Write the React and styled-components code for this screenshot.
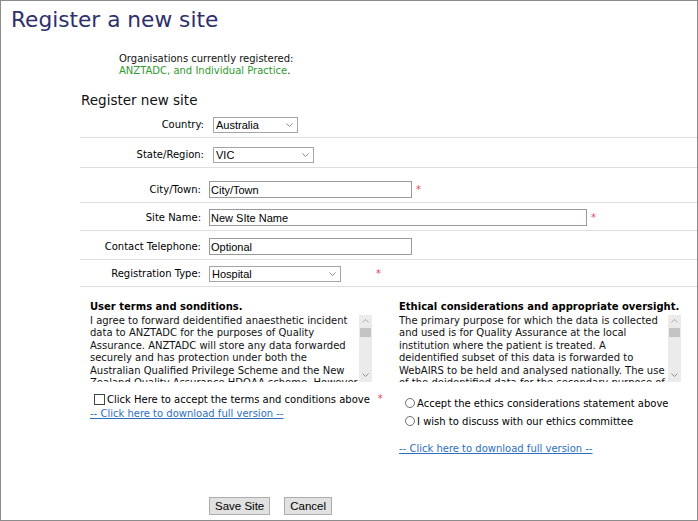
import React from 'react';
import styled, { createGlobalStyle } from 'styled-components';

const GlobalStyle = createGlobalStyle`
  body {
    margin: 0;
    background: #fff;
    font-family: "DejaVu Sans", Verdana, sans-serif;
    color: #000;
  }
`;

// lines as shown in the scrolled boxes (only the visible part)
const termsLines = [
  'I agree to forward deidentified anaesthetic incident',
  'data to ANZTADC for the purposes of Quality',
  'Assurance. ANZTADC will store any data forwarded',
  'securely and has protection under both the',
  'Australian Qualified Privilege Scheme and the New',
  'Zealand Quality Assurance HDQAA scheme. However',
];

const ethicsLines = [
  'The primary purpose for which the data is collected',
  'and used is for Quality Assurance at the local',
  'institution where the patient is treated. A',
  'deidentified subset of this data is forwarded to',
  'WebAIRS to be held and analysed nationally. The use',
  'of the deidentified data for the secondary purpose of',
];

const Chevron = ({ up }) => (
  <svg width='7' height='4' viewBox='0 0 7 4'>
    <polyline
      points={up ? '0.5,3.5 3.5,0.5 6.5,3.5' : '0.5,0.5 3.5,3.5 6.5,0.5'}
      fill='none'
      stroke={up ? '#a8a8a8' : '#8a8a8a'}
      strokeWidth='1'
    />
  </svg>
);

const SelectField = ({ width, ml, value, options }) => (
  <SelectBox $w={width} $ml={ml}>
    <Select defaultValue={value}>
      {options.map((o) => (
        <option key={o}>{o}</option>
      ))}
    </Select>
    <Chevron />
  </SelectBox>
);

const TextScroller = ({ lines }) => (
  <ScrollBox>
    <ScrollText>
      {lines.map((l) => (
        <ScrollLine key={l}>{l}</ScrollLine>
      ))}
    </ScrollText>
    <ScrollBar>
      <ScrollArrow>
        <Chevron up />
      </ScrollArrow>
      <Track>
        <Thumb />
      </Track>
      <ScrollArrow>
        <Chevron />
      </ScrollArrow>
    </ScrollBar>
  </ScrollBox>
);

const App = () => {
  return (
    <>
      <GlobalStyle />
      <Page>
        <Title>Register a new site</Title>

        <OrgInfo>
          Organisations currently registered:
          <br />
          <Green>ANZTADC, and Individual Practice</Green>.
        </OrgInfo>

        <FormHeading>Register new site</FormHeading>

        <FormTable>
          <Row $pt={9}>
            <Label $pr={0}>Country:</Label>
            <SelectField
              width={85}
              ml={9}
              value='Australia'
              options={['Australia', 'New Zealand']}
            />
          </Row>
          <Row $pt={9}>
            <Label $pr={0}>State/Region:</Label>
            <SelectField
              width={101}
              ml={9}
              value='VIC'
              options={['ACT', 'NSW', 'NT', 'QLD', 'SA', 'TAS', 'VIC', 'WA']}
            />
          </Row>
          <Row $pt={13}>
            <Label $pr={3}>City/Town:</Label>
            <TextInput $w={203} type='text' defaultValue='City/Town' />
            <Req $ml={4}>*</Req>
          </Row>
          <Row $pt={6}>
            <Label $pr={3}>Site Name:</Label>
            <TextInput $w={378} type='text' defaultValue='New SIte Name' />
            <Req $ml={4}>*</Req>
          </Row>
          <Row $pt={7}>
            <Label $pr={3}>Contact Telephone:</Label>
            <TextInput $w={203} type='text' defaultValue='Optional' />
          </Row>
          <Row $pt={6}>
            <Label $pr={3}>Registration Type:</Label>
            <SelectField
              width={132}
              ml={5}
              value='Hospital'
              options={['Hospital', 'Day Surgery', 'Individual Practice']}
            />
            <Req $ml={35}>*</Req>
          </Row>
        </FormTable>

        <Agreements>
          <Column>
            <ColHeading>User terms and sonditions.</ColHeading>
            <TextScroller lines={termsLines} />
            <CheckRow>
              <Checkbox type='checkbox' />
              Click Here to accept the terms and conditions above
              <Req $ml={8}>*</Req>
            </CheckRow>
            <DownloadLink href='#' $mt={1}>
              -- Click here to download full version --
            </DownloadLink>
          </Column>

          <Column>
            <ColHeading>Ethical considerations and appropriate oversight.</ColHeading>
            <TextScroller lines={ethicsLines} />
            <RadioGroup>
              <RadioRow>
                <Radio type='radio' name='ethics' />
                Accept the ethics considerations statement above
              </RadioRow>
              <RadioRow>
                <Radio type='radio' name='ethics' />I wish to discuss with our
                ethics committee
              </RadioRow>
            </RadioGroup>
            <DownloadLink href='#' $mt={12}>
              -- Click here to download full version --
            </DownloadLink>
          </Column>
        </Agreements>

        <ButtonBar>
          <Button>Save Site</Button>
          <Button>Cancel</Button>
        </ButtonBar>
      </Page>
    </>
  );
};

export default App;

const Page = styled.div`
  width: 698px;
  height: 521px;
  box-sizing: border-box;
  border: 1px solid #8c8c8c;
  background: #fff;
  overflow: hidden;
`;

const Title = styled.h1`
  margin: 0;
  padding: 6px 0 0 10px;
  font-size: 21.7px;
  font-weight: normal;
  line-height: 26px;
  color: #2f306b;
`;

const OrgInfo = styled.div`
  margin-top: 20px;
  padding-left: 118px;
  font-size: 10px;
  line-height: 11.5px;
  color: #111;
`;

const Green = styled.span`
  color: #2f9a2f;
`;

const FormHeading = styled.h2`
  margin: 17px 0 0;
  padding-left: 80px;
  font-size: 13.5px;
  font-weight: normal;
  line-height: 15px;
  color: #111;
`;

const FormTable = styled.div`
  margin-left: 79px;
`;

const Row = styled.div`
  display: flex;
  align-items: center;
  padding: ${(p) => p.$pt}px 0 4px;
  border-bottom: 1px solid #dedede;
`;

const Label = styled.label`
  width: 124px;
  flex-shrink: 0;
  box-sizing: border-box;
  padding-right: ${(p) => p.$pr}px;
  text-align: right;
  font-size: 10px;
  line-height: 12px;
`;

const SelectBox = styled.div`
  display: flex;
  align-items: center;
  width: ${(p) => p.$w}px;
  height: 16px;
  margin-left: ${(p) => p.$ml}px;
  box-sizing: border-box;
  border: 1px solid #a5a5a5;
  background: #fff;
  padding-right: 4px;

  svg {
    flex-shrink: 0;
  }
`;

const Select = styled.select`
  appearance: none;
  flex: 1;
  min-width: 0;
  height: 100%;
  border: 0;
  outline: 0;
  background: transparent;
  padding: 0 0 0 2px;
  font-family: "Liberation Sans", Arial, sans-serif;
  font-size: 11px;
  color: #000;
`;

const TextInput = styled.input`
  width: ${(p) => p.$w}px;
  height: 17px;
  margin: 0 0 0 5px;
  box-sizing: border-box;
  border: 1px solid #9a9a9a;
  padding: 0 1px;
  font-family: "Liberation Sans", Arial, sans-serif;
  font-size: 11px;
  color: #000;
  outline: 0;
`;

const Req = styled.span`
  margin-left: ${(p) => p.$ml}px;
  color: #e6455d;
  font-size: 10px;
  line-height: 12px;
`;

const Agreements = styled.div`
  display: grid;
  grid-template-columns: 309px 1fr;
  margin-top: 14px;
  padding-left: 89px;
`;

const Column = styled.div`
  display: flex;
  flex-direction: column;
  align-items: flex-start;
  font-size: 10px;
`;

const ColHeading = styled.div`
  font-weight: bold;
  line-height: 12.5px;
  margin-bottom: 1px;
  white-space: nowrap;
`;

const ScrollBox = styled.div`
  display: flex;
  height: 67px;
`;

const ScrollText = styled.div`
  width: 269px;
  overflow: hidden;
  line-height: 12.5px;
  color: #111;
`;

const ScrollLine = styled.div`
  white-space: nowrap;
`;

const ScrollBar = styled.div`
  width: 13px;
  display: flex;
  flex-direction: column;
  background: #ebebeb;
`;

const ScrollArrow = styled.div`
  height: 13px;
  display: flex;
  align-items: center;
  justify-content: center;
`;

const Track = styled.div`
  flex: 1;
`;

const Thumb = styled.div`
  height: 9px;
  margin: 0 1px;
  background: #c3c3c3;
`;

const CheckRow = styled.label`
  display: flex;
  align-items: center;
  margin-top: 11px;
  line-height: 13px;
  white-space: nowrap;
`;

const Checkbox = styled.input`
  appearance: none;
  width: 11px;
  height: 11px;
  margin: 0 2px 0 4px;
  box-sizing: border-box;
  border: 1px solid #444;
  background: #fff;
`;

const RadioGroup = styled.div`
  margin-top: 12.5px;
`;

const RadioRow = styled.label`
  display: flex;
  align-items: center;
  height: 18px;
  white-space: nowrap;
`;

const Radio = styled.input`
  appearance: none;
  width: 10px;
  height: 10px;
  margin: 0 2px 0 6px;
  box-sizing: border-box;
  border: 1px solid #6f6f6f;
  border-radius: 50%;
  background: #fff;
`;

const DownloadLink = styled.a`
  display: block;
  margin-top: ${(p) => p.$mt}px;
  line-height: 13px;
  color: #2d6fbf;
  text-decoration: underline;
`;

const ButtonBar = styled.div`
  display: flex;
  gap: 14px;
  margin-top: 42px;
  padding-left: 208px;
`;

const Button = styled.button`
  height: 18px;
  padding: 0 5px;
  border: 1px solid #adadad;
  border-radius: 0;
  background: #e1e1e1;
  font-family: "Liberation Sans", Arial, sans-serif;
  font-size: 11.5px;
  color: #000;
  cursor: pointer;
`;
